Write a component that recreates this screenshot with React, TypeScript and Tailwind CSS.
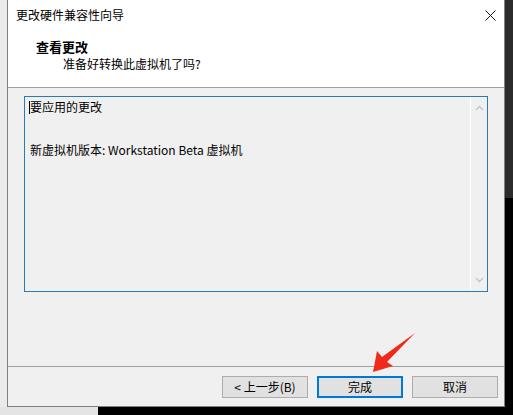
import React from "react";

function Chevron({ down }: { down?: boolean }) {
  return (
    <svg width="9" height="6" viewBox="0 0 9 6" className="block">
      <path
        d={down ? "M1 1 L4.5 4.5 L8 1" : "M1 5 L4.5 1.5 L8 5"}
        fill="none"
        stroke="#c3c3c3"
        strokeWidth="1.3"
      />
    </svg>
  );
}

function Button({ label, primary }: { label: string; primary?: boolean }) {
  return (
    <div
      className={`w-[86px] h-[22px] flex items-center justify-center text-[12px] text-black bg-[#e1e1e1] ${
        primary ? "border-2 border-[#0078d7]" : "border border-[#adadad]"
      }`}
    >
      {label}
    </div>
  );
}

export default function App() {
  return (
    <div
      className="relative w-[513px] h-[415px] flex flex-col overflow-hidden bg-black"
      style={{ fontFamily: '"Noto Sans CJK SC", "Noto Sans", sans-serif' }}
    >
      <div className="flex h-[407px]">
        <div className="w-[7px] bg-[#ebebeb]" />

        {/* wizard window */}
        <div className="w-[498px] flex flex-col bg-[#f0f0f0] border-l border-r border-b border-[#808080]">
          <div className="h-[30px] bg-white flex items-center justify-between pl-[8px] pr-[8px]">
            <span className="text-[12px] leading-none text-black">更改硬件兼容性向导</span>
            <svg width="11" height="11" viewBox="0 0 11 11">
              <path d="M0.5 0.5 L10.5 10.5 M10.5 0.5 L0.5 10.5" stroke="#111" strokeWidth="1" />
            </svg>
          </div>

          <div className="h-[57px] bg-white pt-[9px]">
            <div className="pl-[28px] text-[13px] leading-[16px] font-bold text-black">查看更改</div>
            <div className="pl-[55px] mt-[1px] text-[12px] leading-[16px] text-black">
              准备好转换此虚拟机了吗?
            </div>
          </div>
          <div className="h-px bg-[#a0a0a0]" />

          <div className="h-[278px] pt-[8px] pl-[16px]">
            <div className="w-[464px] h-[196px] border border-[#2a7ab8] flex">
              <div className="flex-1 pl-[5px] pt-[2px] text-[12px] leading-[16px] text-black">
                <div className="flex items-center">
                  <span className="w-px h-[13px] bg-black -ml-[1px]" />
                  <span>要应用的更改</span>
                </div>
                <div className="mt-[27px]">新虚拟机版本: Workstation Beta 虚拟机</div>
              </div>
              <div className="w-[17px] border-l border-white flex flex-col items-center justify-between py-[8px]">
                <Chevron />
                <Chevron down />
              </div>
            </div>
          </div>
          <div className="h-px bg-[#a0a0a0]" />

          <div className="flex-1 flex justify-end items-start pt-[9px] pr-[6px] gap-[9px]">
            <Button label="< 上一步(B)" />
            <Button label="完成" primary />
            <Button label="取消" />
          </div>
        </div>

        <div className="flex-1 flex flex-col">
          <div className="h-[198px] bg-[#2b2b2b]" />
          <div className="flex-1 bg-black" />
        </div>
      </div>
      <div className="flex flex-1">
        <div className="w-[98px] bg-[#e4e4e4]" />
        <div className="flex-1 bg-black" />
      </div>

      {/* red pointer arrow drawn on top of the screenshot */}
      <svg
        className="absolute left-0 top-0 pointer-events-none"
        width="513"
        height="415"
        viewBox="0 0 513 415"
      >
        <polygon
          points="373,372 377,351 382,357 415,333 387,362 393,366"
          fill="#f02a1a"
        />
      </svg>
    </div>
  );
}
